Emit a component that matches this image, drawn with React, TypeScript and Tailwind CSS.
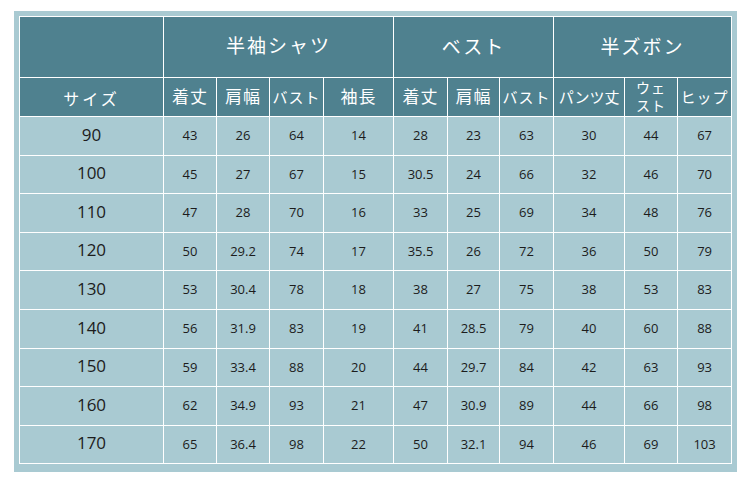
import React from "react";

const widths = [144, 53, 53, 54, 70, 54, 52, 54, 71, 53, 54];

const rows: (string | number)[][] = [
  [90, 43, 26, 64, 14, 28, 23, 63, 30, 44, 67],
  [100, 45, 27, 67, 15, "30.5", 24, 66, 32, 46, 70],
  [110, 47, 28, 70, 16, 33, 25, 69, 34, 48, 76],
  [120, 50, "29.2", 74, 17, "35.5", 26, 72, 36, 50, 79],
  [130, 53, "30.4", 78, 18, 38, 27, 75, 38, 53, 83],
  [140, 56, "31.9", 83, 19, 41, "28.5", 79, 40, 60, 88],
  [150, 59, "33.4", 88, 20, 44, "29.7", 84, 42, 63, 93],
  [160, 62, "34.9", 93, 21, 47, "30.9", 89, 44, 66, 98],
  [170, 65, "36.4", 98, 22, 50, "32.1", 94, 46, 69, 103],
];

const font = { fontFamily: '"Open Sans", "Noto Sans CJK JP", sans-serif' };

export default function App() {
  return (
    <div className="w-[750px] h-[487px] bg-white" style={font}>
      <div className="ml-[14px] pt-[11px]">
        <div className="w-[723px] h-[461px] bg-[#a9cad2] pl-[5px] pt-[5px]">
          <table className="table-fixed border-collapse w-[712px]">
            <colgroup>
              {widths.map((w, i) => (
                <col key={i} style={{ width: w }} />
              ))}
            </colgroup>
            <thead>
              <tr className="h-[61px] bg-[#4f818f] text-white">
                <th className="border border-white font-normal"></th>
                <th colSpan={4} className="border border-white text-[19px] font-normal tracking-[2px] pb-[1px]">
                  半袖シャツ
                </th>
                <th colSpan={3} className="border border-white text-[19px] font-normal tracking-[2px]">
                  ベスト
                </th>
                <th colSpan={3} className="border border-white text-[19px] font-normal tracking-[2px]">
                  半ズボン
                </th>
              </tr>
              <tr className="h-[39px] bg-[#4f818f] text-white">
                <th className="border border-white font-normal text-[16px] tracking-[3px] pt-[3px]">サイズ</th>
                <th className="border border-white font-normal text-[17px] tracking-[1px]">着丈</th>
                <th className="border border-white border-l-[#c6d8dd] font-normal text-[17px] tracking-[1px]">肩幅</th>
                <th className="border border-white font-normal text-[15px] whitespace-nowrap tracking-[1px]">バスト</th>
                <th className="border border-white border-l-[#c6d8dd] font-normal text-[17px] tracking-[1px]">袖長</th>
                <th className="border border-white font-normal text-[17px] tracking-[1px]">着丈</th>
                <th className="border border-white border-l-[#c6d8dd] font-normal text-[17px] tracking-[1px]">肩幅</th>
                <th className="border border-white font-normal text-[15px] whitespace-nowrap tracking-[1px]">バスト</th>
                <th className="border border-white font-normal text-[15px] whitespace-nowrap">パンツ丈</th>
                <th className="border border-white font-normal text-[14px] leading-[18px] tracking-[1px]">
                  <div>ウェ</div>
                  <div>スト</div>
                </th>
                <th className="border border-white border-l-[#c6d8dd] font-normal text-[15px] whitespace-nowrap tracking-[1px]">ヒップ</th>
              </tr>
            </thead>
            <tbody>
              {rows.map((r, ri) => (
                <tr key={ri} className="h-[38.6px] text-[#1c1c1c]">
                  {r.map((v, ci) => (
                    <td
                      key={ci}
                      className={
                        ci === 0
                          ? "border border-white text-center text-[17px] font-medium pb-[3px]"
                          : "border border-white text-center text-[13px]"
                      }
                    >
                      {v}
                    </td>
                  ))}
                </tr>
              ))}
            </tbody>
          </table>
        </div>
      </div>
    </div>
  );
}
